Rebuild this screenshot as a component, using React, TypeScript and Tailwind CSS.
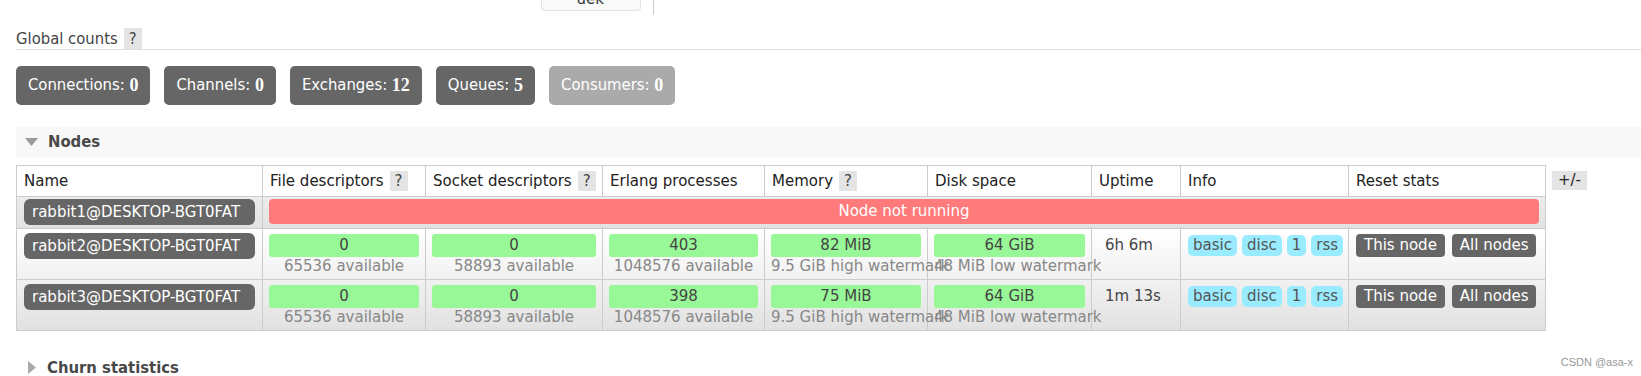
import React from "react";

const counts = [
  { label: "Connections", value: "0", dim: false },
  { label: "Channels", value: "0", dim: false },
  { label: "Exchanges", value: "12", dim: false },
  { label: "Queues", value: "5", dim: false },
  { label: "Consumers", value: "0", dim: true },
];

const columns = [
  { title: "Name", w: "w-[246px]", help: false },
  { title: "File descriptors", w: "w-[163px]", help: true },
  { title: "Socket descriptors", w: "w-[177px]", help: true },
  { title: "Erlang processes", w: "w-[162px]", help: false },
  { title: "Memory", w: "w-[163px]", help: true },
  { title: "Disk space", w: "w-[164px]", help: false },
  { title: "Uptime", w: "w-[89px]", help: false },
  { title: "Info", w: "w-[168px]", help: false },
  { title: "Reset stats", w: "w-[197px]", help: false },
];

const nodes = [
  {
    name: "rabbit2@DESKTOP-BGT0FAT",
    fd: "0",
    fdAvail: "65536 available",
    sd: "0",
    sdAvail: "58893 available",
    proc: "403",
    procAvail: "1048576 available",
    mem: "82 MiB",
    disk: "64 GiB",
    uptime: "6h 6m",
    bg: "bg-linear-to-b from-[#ffffff] to-[#f1f1f1]",
  },
  {
    name: "rabbit3@DESKTOP-BGT0FAT",
    fd: "0",
    fdAvail: "65536 available",
    sd: "0",
    sdAvail: "58893 available",
    proc: "398",
    procAvail: "1048576 available",
    mem: "75 MiB",
    disk: "64 GiB",
    uptime: "1m 13s",
    bg: "bg-linear-to-b from-[#f1f1f1] to-[#e1e1e1]",
  },
];

const narrow = "font-['DejaVu_Sans_Condensed','DejaVu_Sans',sans-serif]";

function Help() {
  return (
    <span className="inline-block bg-[#e4e4e4] px-[5px] leading-[20px] text-[#444] ml-[6px]">?</span>
  );
}

function NameBadge({ name }: { name: string }) {
  return (
    <div className="bg-[#666] text-white rounded-[6px] leading-[26px] px-[8px] w-[231px] whitespace-nowrap">
      {name}
    </div>
  );
}

function Bar({ value, sub }: { value: string; sub?: string }) {
  return (
    <div className="flex flex-col items-stretch">
      <div className="bg-[#98f898] text-[#444] rounded-[3px] leading-[23px] text-center">{value}</div>
      {sub && (
        <div className="text-[#888] leading-[19px] text-center whitespace-nowrap">{sub}</div>
      )}
    </div>
  );
}

function Tag({ label }: { label: string }) {
  return <span className="bg-[#99ebff] text-[#555] rounded-[5px] px-[5px] leading-[21px]">{label}</span>;
}

function Button({ label }: { label: string }) {
  return <span className="bg-[#666] text-white rounded-[4px] px-[8px] leading-[23px] whitespace-nowrap">{label}</span>;
}

export default function App() {
  return (
    <div className="relative w-[1641px] h-[376px] overflow-hidden bg-white text-[15px] font-['DejaVu_Sans',sans-serif] text-[#222]">
      {/* top strip, cut off */}
      <div className="flex h-[15px] pl-[541px]">
        <div className="w-[100px] h-[11px] overflow-hidden bg-[#f9f9f9] border border-t-0 border-[#e3e3e3] rounded-b-[4px] text-right pr-[36px]">
          <div className="-mt-[10px] leading-[18px] text-[#333]">uek</div>
        </div>
        <div className="ml-[12px] w-px h-[15px] bg-[#c8c8c8]" />
      </div>

      <div className="pl-[16px] mt-[14px]">
        {/* Global counts */}
        <div className={`flex items-end h-[21px] border-b border-[#dedede] text-[16.5px] text-[#444] ${narrow}`}>
          <span className="leading-[20px]">Global counts</span>
          <span className="inline-block bg-[#e4e4e4] px-[5px] leading-[21px] ml-[6px]">?</span>
        </div>

        <div className="flex gap-[14px] mt-[16px]">
          {counts.map((c) => (
            <div
              key={c.label}
              className={`h-[39px] flex items-center px-[12px] rounded-[5px] text-white text-[16.5px] ${narrow} ${
                c.dim ? "bg-[#aaa]" : "bg-[#666]"
              }`}
            >
              {c.label}:&nbsp;<b className="font-['Liberation_Serif',serif] text-[18px]">{c.value}</b>
            </div>
          ))}
        </div>

        {/* Nodes section */}
        <div className="mt-[22px] h-[30px] bg-[#f8f8f8] flex items-center pl-[9px]">
          <svg width="13" height="8" viewBox="0 0 13 8" className="mr-[10px]">
            <path d="M0 0 L13 0 L6.5 8 Z" fill="#9a9a9a" />
          </svg>
          <span className={`font-bold text-[16.5px] text-[#484848] ${narrow}`}>Nodes</span>
        </div>

        <div className="flex mt-[8px] items-start">
          <table className="border-collapse table-fixed w-[1529px] border border-[#ccc]">
            <thead>
              <tr className="bg-white">
                {columns.map((col) => (
                  <th
                    key={col.title}
                    className={`${col.w} border border-[#ccc] text-left font-normal px-[7px] h-[31px] whitespace-nowrap`}
                  >
                    {col.title}
                    {col.help && <Help />}
                  </th>
                ))}
              </tr>
            </thead>
            <tbody>
              <tr className="bg-linear-to-b from-[#ececec] to-[#e2e2e2]">
                <td className="border border-[#ccc] px-[7px] pt-[2px] pb-[3px] align-top">
                  <NameBadge name="rabbit1@DESKTOP-BGT0FAT" />
                </td>
                <td colSpan={8} className="border border-[#ccc] px-[6px] pt-[2px] pb-[3px] align-top">
                  <div className="bg-[#ff7a7a] text-white rounded-[4px] leading-[25px] text-center">Node not running</div>
                </td>
              </tr>
              {nodes.map((n) => (
                <tr key={n.name} className={n.bg}>
                  <td className="border border-[#ccc] px-[7px] pt-[4px] pb-[3px] align-top">
                    <NameBadge name={n.name} />
                  </td>
                  <td className="border border-[#ccc] px-[6px] pt-[5px] pb-[3px] align-top">
                    <Bar value={n.fd} sub={n.fdAvail} />
                  </td>
                  <td className="border border-[#ccc] px-[6px] pt-[5px] pb-[3px] align-top">
                    <Bar value={n.sd} sub={n.sdAvail} />
                  </td>
                  <td className="border border-[#ccc] px-[6px] pt-[5px] pb-[3px] align-top">
                    <Bar value={n.proc} sub={n.procAvail} />
                  </td>
                  <td className="border border-[#ccc] px-[6px] pt-[5px] pb-[3px] align-top overflow-visible">
                    <Bar value={n.mem} sub="9.5 GiB high watermark" />
                  </td>
                  <td className="border border-[#ccc] px-[6px] pt-[5px] pb-[3px] align-top overflow-visible">
                    <Bar value={n.disk} sub="48 MiB low watermark" />
                  </td>
                  <td className="border border-[#ccc] pl-[13px] pt-[5px] pb-[3px] align-top text-[#444] leading-[23px]">
                    {n.uptime}
                  </td>
                  <td className="border border-[#ccc] px-[7px] pt-[6px] pb-[3px] align-top">
                    <div className="flex gap-[5px]">
                      <Tag label="basic" />
                      <Tag label="disc" />
                      <Tag label="1" />
                      <Tag label="rss" />
                    </div>
                  </td>
                  <td className="border border-[#ccc] px-[7px] pt-[5px] pb-[3px] align-top">
                    <div className="flex gap-[7px]">
                      <Button label="This node" />
                      <Button label="All nodes" />
                    </div>
                  </td>
                </tr>
              ))}
            </tbody>
          </table>
          <span className="ml-[6px] mt-[6px] bg-[#e4e4e4] px-[6px] leading-[19px] text-[#222]">+/-</span>
        </div>

        {/* Churn statistics */}
        <div className="mt-[23px] h-[27px] flex items-center pl-[12px]">
          <svg width="8" height="13" viewBox="0 0 8 13" className="mr-[11px]">
            <path d="M0 0 L8 6.5 L0 13 Z" fill="#aaa" />
          </svg>
          <span className={`font-bold text-[16.5px] leading-[20px] text-[#484848] ${narrow}`}>Churn statistics</span>
        </div>
      </div>

      <div className="absolute right-[8px] bottom-[6px] text-[11px] text-[#999] font-['Liberation_Sans',sans-serif]">CSDN @asa-x</div>
    </div>
  );
}
